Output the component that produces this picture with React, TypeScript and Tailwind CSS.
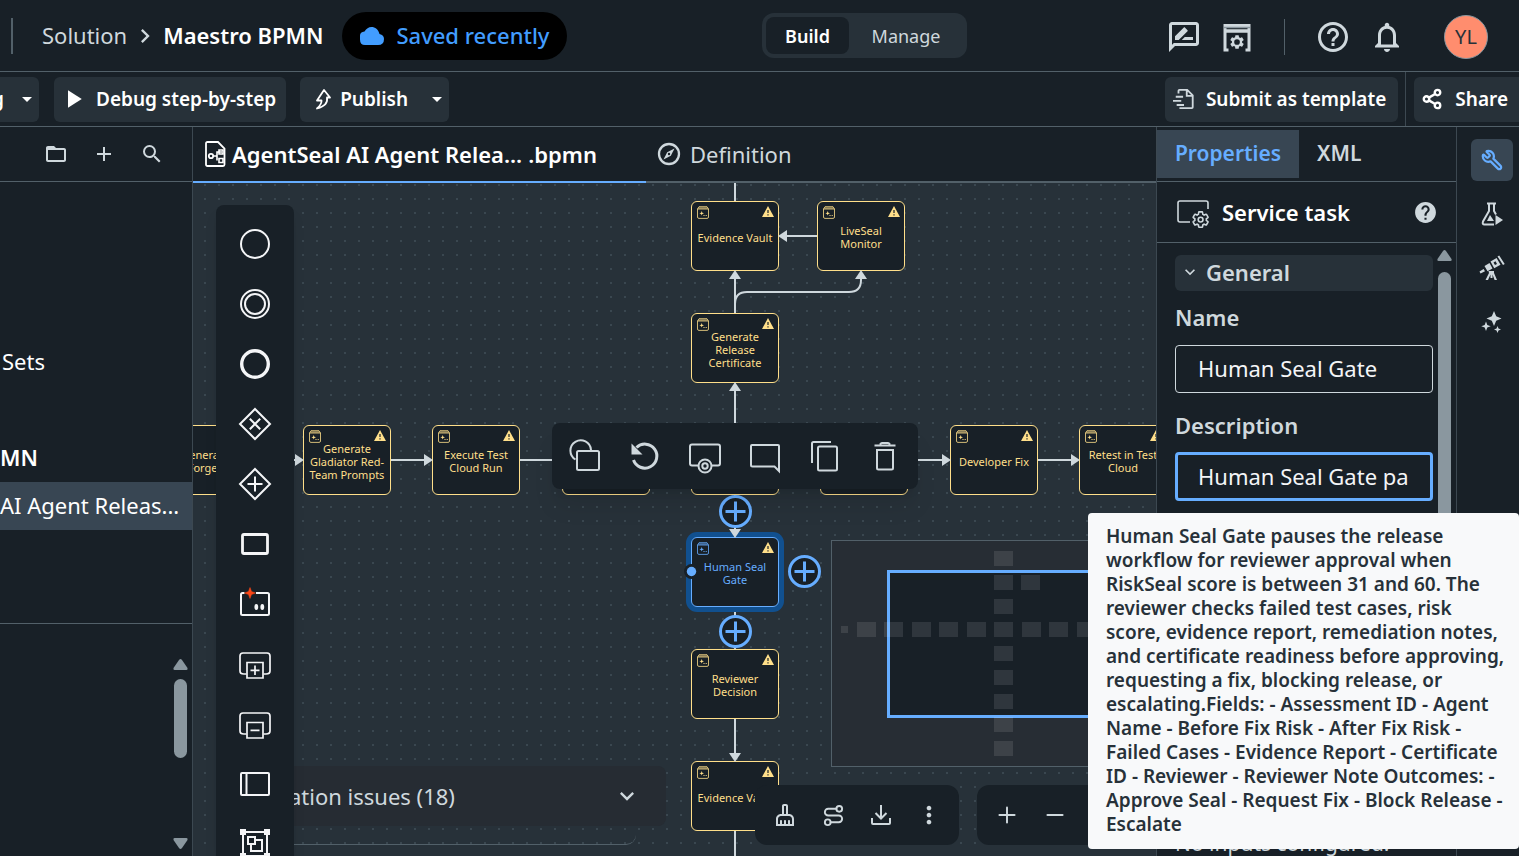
import React from 'react';
import { Minus, Plus, Route, Share2, Wrench } from 'lucide-react';
import {
  MdAdd,
  MdArrowDropDown,
  MdChevronRight,
  MdExpandMore,
  MdFolderOpen,
  MdHelp,
  MdHelpOutline,
  MdMoreVert,
  MdNotificationsNone,
  MdOutlineCleaningServices,
  MdOutlineRateReview,
  MdPlayArrow,
  MdSearch,
} from 'react-icons/md';

const GEAR =
  'M19.14 12.94c.04-.3.06-.61.06-.94s-.02-.64-.07-.94l2.03-1.58a.49.49 0 0 0 .12-.61l-1.92-3.32a.49.49 0 0 0-.59-.22l-2.39.96a7 7 0 0 0-1.62-.94l-.36-2.54A.48.48 0 0 0 13.92 2.4h-3.84a.47.47 0 0 0-.47.41l-.36 2.54a7.2 7.2 0 0 0-1.62.94l-2.39-.96a.48.48 0 0 0-.59.22L2.74 8.87a.47.47 0 0 0 .12.61l2.03 1.58a6 6 0 0 0-.01 1.88l-2.03 1.58a.49.49 0 0 0-.12.61l1.92 3.32c.12.22.37.29.59.22l2.39-.96c.5.38 1.03.7 1.62.94l.36 2.54c.05.24.24.41.48.41h3.84c.24 0 .44-.17.47-.41l.36-2.54a7 7 0 0 0 1.62-.94l2.39.96c.22.08.47 0 .59-.22l1.92-3.32a.47.47 0 0 0-.12-.61z';

interface FlowNode {
  id: string;
  label: string;
  x: number;
  y: number;
  selected?: boolean;
}

// Positions are canvas coordinates
const nodes: FlowNode[] = [
  { id: 'vault', label: 'Evidence Vault', x: 498, y: 18 },
  { id: 'live', label: 'LiveSeal Monitor', x: 624, y: 18 },
  { id: 'cert', label: 'Generate Release Certificate', x: 498, y: 130 },
  { id: 'forge', label: 'Generate Test Forge Suite', x: -20, y: 242 },
  { id: 'prompts', label: 'Generate Gladiator Red-Team Prompts', x: 110, y: 242 },
  { id: 'run', label: 'Execute Test Cloud Run', x: 239, y: 242 },
  { id: 'score', label: '', x: 369, y: 242 },
  { id: 'gateway', label: '', x: 498, y: 242 },
  { id: 'plan', label: '', x: 627, y: 242 },
  { id: 'fix', label: 'Developer Fix', x: 757, y: 242 },
  { id: 'retest', label: 'Retest in Test Cloud', x: 886, y: 242 },
  { id: 'gate', label: 'Human Seal Gate', x: 498, y: 354, selected: true },
  { id: 'decision', label: 'Reviewer Decision', x: 498, y: 466 },
  { id: 'vault2', label: 'Evidence Vault', x: 498, y: 578 },
];

const edges = [
  'M542 0V18',
  'M624 53H594',
  'M542 130V96',
  'M542 130V121Q542 109 554 109H656Q668 109 668 97V96',
  'M542 242V208',
  'M100 277H103',
  'M198 277H232',
  'M327 277H362',
  'M715 277H750',
  'M845 277H880',
  'M542 312V348',
  'M542 424V460',
  'M542 536V572',
  'M542 648V680',
];

const arrows = [
  'M585 53L594 47V59Z',
  'M542 87L536 96H548Z',
  'M668 87L662 96H674Z',
  'M542 199L536 208H548Z',
  'M111 277L102 271V283Z',
  'M240 277L231 271V283Z',
  'M758 277L749 271V283Z',
  'M887 277L878 271V283Z',
  'M542 355L536 346H548Z',
  'M542 467L536 458H548Z',
  'M542 579L536 570H548Z',
];

const addHandles = [
  { x: 526, y: 312 },
  { x: 595, y: 372 },
  { x: 526, y: 432 },
];

const minimapBlocks = [
  { x: 162, y: 10 },
  { x: 162, y: 34 },
  { x: 189, y: 34 },
  { x: 162, y: 58 },
  { x: 25, y: 81 },
  { x: 52, y: 81 },
  { x: 80, y: 81 },
  { x: 107, y: 81 },
  { x: 135, y: 81 },
  { x: 162, y: 81 },
  { x: 190, y: 81 },
  { x: 217, y: 81 },
  { x: 245, y: 81 },
  { x: 162, y: 105 },
  { x: 162, y: 129 },
  { x: 162, y: 153 },
  { x: 162, y: 176 },
  { x: 162, y: 200 },
];

const palette = [
  {
    name: 'Start event',
    icon: <circle cx="18" cy="18" r="14" strokeWidth="2" />,
  },
  {
    name: 'Intermediate event',
    icon: (
      <g strokeWidth="2">
        <circle cx="18" cy="18" r="14" />
        <circle cx="18" cy="18" r="10" />
      </g>
    ),
  },
  {
    name: 'End event',
    icon: <circle cx="18" cy="18" r="13.3" strokeWidth="3.4" />,
  },
  {
    name: 'Exclusive gateway',
    icon: <path d="M18 3l15 15-15 15L3 18zM12.8 12.8l10.4 10.4M23.2 12.8L12.8 23.2" strokeWidth="2" />,
  },
  {
    name: 'Parallel gateway',
    icon: <path d="M18 3l15 15-15 15L3 18zM18 10.5v15M10.5 18h15" strokeWidth="2" />,
  },
  {
    name: 'Task',
    icon: <rect x="5.5" y="8.5" width="25" height="19" rx="1.5" strokeWidth="2.8" />,
  },
  {
    name: 'Agent task',
    icon: (
      <>
        <path d="M7.500 7H5.500Q4 7 4 8.500V27.500Q4 29 5.500 29H30.500Q32 29 32 27.500V8.500Q32 7 30.500 7H19" strokeWidth="2" />
        <path d="M13 1.500L14.500 5.500L18.500 7L14.500 8.500L13 12.500L11.500 8.500L7.500 7L11.500 5.500Z" fill="#fa4616" stroke="#fa4616" strokeWidth="0.5" />
        <ellipse cx="19.300" cy="21" rx="1.900" ry="2.900" fill="currentColor" stroke="none" />
        <ellipse cx="25.300" cy="21" rx="1.900" ry="2.900" fill="currentColor" stroke="none" />
      </>
    ),
  },
  {
    name: 'Expanded subprocess',
    icon: (
      <g strokeWidth="1.7">
        <path d="M9.500 28H7Q3 28 3 25V10Q3 7 6 7H30Q33 7 33 10V25Q33 28 29 28H26.500" />
        <path d="M10 16.500H26V32H10ZM18 19.500V29M13.500 24.300H22.500" />
      </g>
    ),
  },
  {
    name: 'Collapsed subprocess',
    icon: (
      <g strokeWidth="1.7">
        <path d="M9.500 28H7Q3 28 3 25V10Q3 7 6 7H30Q33 7 33 10V25Q33 28 29 28H26.500" />
        <path d="M10 16.500H26V32H10ZM13.500 24.300H22.500" />
      </g>
    ),
  },
  {
    name: 'Pool',
    icon: <path d="M5 7H31Q32 7 32 8V28Q32 29 31 29H5Q4 29 4 28V8Q4 7 5 7ZM9.500 7V29" strokeWidth="2" />,
  },
  {
    name: 'Group',
    icon: (
      <>
        <path d="M6 6H30V30H6Z" strokeWidth="2" />
        <path d="M3 3h6v6H3zM27 3h6v6h-6zM3 27h6v6H3zM27 27h6v6h-6z" fill="currentColor" stroke="none" />
        <path d="M11 11h7v7h-7zM18 14h7v11h-11v-7" strokeWidth="2" />
      </>
    ),
  },
];

const contextActions = [
  {
    name: 'Change element',
    icon: (
      <>
        <path d="M8.500 21.500A10.300 10.300 0 1 1 24 12" />
        <rect x="10" y="13" width="22" height="19" rx="1.500" />
      </>
    ),
  },
  {
    name: 'Reset',
    icon: (
      <>
        <path d="M6.500 22A12 12 0 1 0 9.500 9.500" strokeWidth="3" />
        <path d="M4.500 5.500V16.500H15.500Z" fill="currentColor" stroke="none" />
      </>
    ),
  },
  {
    name: 'Add boundary event',
    icon: (
      <>
        <path d="M11 27.500H5Q3 27.500 3 25.500V8.500Q3 6.500 5 6.500H31Q33 6.500 33 8.500V25.500Q33 27.500 31 27.500H25" />
        <circle cx="18" cy="28" r="6.500" />
        <circle cx="18" cy="28" r="2.700" />
      </>
    ),
  },
  {
    name: 'Comment',
    icon: <path d="M32 33V8Q32 7 31 7H5Q4 7 4 8V27Q4 28.500 5.500 28.500H27.500Z" />,
  },
  {
    name: 'Copy',
    icon: <path d="M5 25V5.500Q5 4 6.500 4H24M12.500 8.500H28.500Q30 8.500 30 10V31Q30 32.500 28.500 32.500H12.500Q11 32.500 11 31V10Q11 8.500 12.500 8.500Z" />,
  },
  {
    name: 'Delete',
    icon: <path d="M7.500 7.500H28.500M13 6.500Q14 5 15 5H21Q22 5 23 6.500M10 12H26V30Q26 31.500 24.500 31.500H11.500Q10 31.500 10 30Z" />,
  },
];

function Warning() {
  return (
    <svg viewBox="0 0 12 11" className="absolute top-1 right-1 h-[11px] w-3">
      <path d="M6 0L12 11H0Z" fill="#ffdf8a" />
      <path d="M6 4V7M6 8.200V9.400" stroke="#182027" strokeWidth="1.200" />
    </svg>
  );
}

function TaskIcon() {
  return (
    <svg viewBox="0 0 12 13" className="absolute top-1 left-[5px] h-[13px] w-3" fill="none" stroke="currentColor">
      <path d="M0.500 3L2 0.700H10L11.500 3V11Q11.500 12.400 10 12.400H2Q0.500 12.400 0.500 11ZM0.500 3H11.500" opacity="0.800" />
      <path d="M1 3L2.200 1H9.800L11 3Z" fill="currentColor" stroke="none" opacity="0.400" />
      <path d="M4.700 5L5.300 6.700L7 7.300L5.300 7.900L4.700 9.600L4.100 7.900L2.400 7.300L4.100 6.700Z" fill="currentColor" stroke="none" />
      <path d="M6.500 9.500h1M8.700 9.500h1" />
    </svg>
  );
}

function NodeCard({ node }: { node: FlowNode }) {
  return (
    <div
      className={`absolute flex h-[70px] w-[88px] items-center justify-center rounded-[6px] border px-1 pt-0.5 text-center text-[11px] leading-[13px] ${
        node.selected
          ? 'border-[#66adff] bg-[#182027] text-[#66adff] ring-[5px] ring-[#11508f]'
          : 'border-[#ffdf8a] bg-[#182027] text-[#ffdf8a]'
      }`}
      style={{ left: node.x, top: node.y }}
    >
      <TaskIcon />
      <Warning />
      {node.label}
    </div>
  );
}

function Header() {
  return (
    <header className="flex h-[72px] shrink-0 items-center border-b border-[#526069] pr-[31px] pl-[11px]">
      <div className="flex flex-1 items-center">
        <div className="h-9 w-0.5 bg-[#526069]" />
        <a href="#solution" className="ml-[29px] text-[22px] text-[#cfd8dd]">Solution</a>
        <MdChevronRight size={28} className="mx-1 text-[#cfd8dd]" />
        <span className="text-[22px] font-semibold text-white">Maestro BPMN</span>
        <div className="ml-[19px] flex h-12 items-center gap-3 rounded-full bg-black px-[18px] text-[22px] font-medium text-[#429dff]">
          <svg viewBox="0 0 24 18" className="h-[18px] w-6" fill="currentColor">
            <path d="M5 18Q0 18 0 12.500V8.500Q0 5 4.500 4.500C6.500 1.500 8.500 0 11.500 0C15 0 18.500 2.500 19.500 7C22.500 7.500 24 9.500 24 12Q24 18 18 18Z" />
          </svg>
          Saved recently
        </div>
      </div>
      <nav className="flex h-[45px] items-center rounded-xl bg-[#273139] p-1 text-lg">
        <button className="h-[37px] w-[83px] rounded-lg bg-[#182027] font-semibold text-white">Build</button>
        <button className="w-[114px] text-[#cfd8dd]">Manage</button>
      </nav>
      <div className="flex w-[521px] items-center justify-end pt-0.5 text-[#cfd8dd]">
        <button aria-label="Feedback">
          <MdOutlineRateReview size={36} />
        </button>
        <button aria-label="App settings" className="ml-[17px]">
          <svg viewBox="0 0 36 36" className="size-9" fill="none" stroke="currentColor">
            <path d="M9.500 31H6V6.500H30V31H26.500" strokeWidth="3" />
            <path d="M5 12H31" strokeWidth="3.500" />
            <path d="M5 8.500H31" stroke="#8a979f" strokeWidth="1.500" />
            <g transform="translate(9.500 14.500) scale(0.710)">
              <path d={GEAR} fill="currentColor" stroke="none" />
              <circle cx="12" cy="12" r="4" fill="#182027" stroke="none" />
            </g>
          </svg>
        </button>
        <div className="ml-[29px] h-9 w-px bg-[#526069]" />
        <button aria-label="Help" className="ml-[30px]">
          <MdHelpOutline size={36} />
        </button>
        <button aria-label="Notifications" className="ml-[18px]">
          <MdNotificationsNone size={36} />
        </button>
        <button className="ml-[39px] size-11 rounded-full border border-[#8a979f] bg-[#ff8d6e] text-xl text-[#273139]">YL</button>
      </div>
    </header>
  );
}

function Toolbar() {
  return (
    <div className="flex h-[55px] shrink-0 items-center border-b border-[#526069] text-[19px] font-semibold text-white">
      <button className="flex h-[45px] w-[39px] items-center justify-between overflow-hidden rounded-r-md bg-[#273139]">
        <span className="-ml-2">g</span>
        <MdArrowDropDown size={24} className="shrink-0" />
      </button>
      <button className="ml-[15px] flex h-[45px] items-center gap-[11px] rounded-md bg-[#273139] pr-[10px] pl-[7px]">
        <MdPlayArrow size={24} className="scale-125" />
        Debug step-by-step
      </button>
      <div className="ml-[14px] flex h-[45px] items-center rounded-md bg-[#273139]">
        <button className="flex items-center gap-2 pl-[14px]">
          <svg viewBox="0 0 18 24" className="h-6 w-[18px]" fill="none" stroke="currentColor" strokeWidth="1.800" strokeLinejoin="round">
            <path d="M10 3L16 10.500H13Q14.500 18.500 3 21.500Q8 17 7.500 13.500H3Z" />
          </svg>
          Publish
        </button>
        <button aria-label="More publish options" className="pl-[17px]">
          <MdArrowDropDown size={24} />
        </button>
      </div>
      <div className="flex-1" />
      <button className="flex h-[45px] items-center gap-[11px] rounded-md bg-[#273139] pr-3 pl-2">
        <svg viewBox="0 0 24 24" className="size-[22px]" fill="none" stroke="#cfd8dd" strokeWidth="2">
          <path d="M6 6V3Q6 2 7 2H15.500L21.500 8V21Q21.500 22 20.500 22H7M15 2V8.500H21M3 9.500H11M0 14H9M4 18.500H12" />
        </svg>
        Submit as template
      </button>
      <div className="mr-2 ml-[7px] h-full w-px bg-[#3c4851]" />
      <button className="flex h-[45px] items-center gap-3 rounded-l-md bg-[#273139] pr-[11px] pl-[7px]">
        <Share2 size={22} strokeWidth={2.6} />
        Share
      </button>
    </div>
  );
}

function Sidebar() {
  return (
    <aside className="flex w-[193px] shrink-0 flex-col border-r border-[#3c4851] text-[22px] text-white">
      <div className="flex h-[55px] shrink-0 items-center justify-end gap-6 border-b border-[#526069] pr-7 text-[#cfd8dd]">
        <button aria-label="New folder"><MdFolderOpen size={24} /></button>
        <button aria-label="Add"><MdAdd size={24} /></button>
        <button aria-label="Search"><MdSearch size={24} /></button>
      </div>
      <ul className="flex h-[442px] shrink-0 flex-col border-b border-[#526069] pt-[156px] leading-[46px]">
        <li className="mb-12 h-12 pl-[2px]">Sets</li>
        <li className="h-12 font-semibold">MN</li>
        <li className="h-12 bg-[#384653] whitespace-nowrap">AI Agent Releas...</li>
      </ul>
      <div className="flex flex-1 justify-end pr-1">
        <div className="flex flex-col items-center pt-[35px] pb-[7px]">
          <svg viewBox="0 0 15 11" className="h-[11px] w-[15px]" fill="#8a979f">
            <path d="M7.500 0Q8.200 0 9 1L14.500 9Q15 11 13.500 11H1.500Q0 11 0.500 9L6 1Q6.800 0 7.500 0Z" />
          </svg>
          <div className="mt-[9px] h-[79px] w-[13px] rounded-full bg-[#8a979f]" />
          <svg viewBox="0 0 15 11" className="mt-auto h-[11px] w-[15px] rotate-180" fill="#8a979f">
            <path d="M7.500 0Q8.200 0 9 1L14.500 9Q15 11 13.500 11H1.500Q0 11 0.500 9L6 1Q6.800 0 7.500 0Z" />
          </svg>
        </div>
      </div>
    </aside>
  );
}

function Minimap() {
  return (
    <div className="absolute right-[23px] bottom-[89px] h-[227px] w-[302px] border border-[#526069] bg-[#272d34]">
      <div className="absolute top-[29px] left-[55px] h-[148px] w-[230px] border-[3px] border-[#66adff] bg-[#182027]" />
      <div className="absolute top-[85px] left-[9px] size-[7px] bg-white/10" />
      {minimapBlocks.map((block) => (
        <div key={`${block.x}-${block.y}`} className="absolute h-[15px] w-[19px] bg-white/10" style={{ left: block.x, top: block.y }} />
      ))}
    </div>
  );
}

function Canvas() {
  return (
    <div className="relative flex-1 overflow-hidden bg-[#273139] [background-image:radial-gradient(circle,#3a4750_1px,transparent_1.500px)] [background-position:5px_9px] [background-size:14px_14px]">
      <svg className="absolute inset-0 size-full" fill="none">
        {edges.map((d) => (
          <path key={d} d={d} stroke="#cfd8dd" strokeWidth="2" />
        ))}
      </svg>
      {nodes.map((node) => (
        <NodeCard key={node.id} node={node} />
      ))}
      <svg className="absolute inset-0 size-full" fill="#cfd8dd">
        {arrows.map((d) => (
          <path key={d} d={d} />
        ))}
        <circle cx="498.500" cy="388.500" r="7.500" fill="#182027" />
        <circle cx="498.500" cy="388.500" r="4.700" fill="#66adff" />
      </svg>
      {addHandles.map((handle) => (
        <button key={`${handle.x}-${handle.y}`} aria-label="Add element" className="absolute size-[33px]" style={{ left: handle.x, top: handle.y }}>
          <svg viewBox="0 0 33 33" className="size-full" fill="#182027" stroke="#66adff" strokeWidth="3">
            <circle cx="16.500" cy="16.500" r="15" />
            <path d="M16.500 6.500V26.500M6.500 16.500H26.500" />
          </svg>
        </button>
      ))}

      {/* Validation drawer */}
      <div className="absolute bottom-[11px] left-9 h-8 w-[407px] rounded-br-[10px] border-b border-[#526069]" />
      <button className="absolute bottom-[30px] left-9 flex h-[60px] w-[437px] items-center justify-between rounded-lg bg-[#262c33] pr-[25px] pl-[10px] text-[22px] text-[#cfd8dd]">
        Validation issues (18)
        <MdExpandMore size={28} />
      </button>

      {/* Element palette */}
      <div className="absolute top-[22px] bottom-0 left-[23px] flex w-[78px] flex-col items-center overflow-hidden rounded-t-lg bg-[#182027] pt-[9px] text-[#f4f5f7] shadow-lg">
        {palette.map((item) => (
          <button key={item.name} aria-label={item.name} className="flex h-[60px] w-[60px] shrink-0 items-center justify-center">
            <svg viewBox="0 0 36 36" className="size-9" fill="none" stroke="currentColor">
              {item.icon}
            </svg>
          </button>
        ))}
      </div>

      {/* Context pad of the selected element */}
      <div className="absolute top-[240px] left-[359px] flex h-[66px] items-center rounded-lg bg-[#182027] px-[3px] text-[#cfd8dd] shadow-xl">
        {contextActions.map((action) => (
          <button key={action.name} aria-label={action.name} className="flex h-[60px] w-[60px] items-center justify-center">
            <svg viewBox="0 0 36 36" className="size-9" fill="none" stroke="currentColor" strokeWidth="2">
              {action.icon}
            </svg>
          </button>
        ))}
      </div>

      <Minimap />

      <div className="absolute right-[23px] bottom-[11px] flex gap-[18px] text-[#cfd8dd]">
        <div className="flex h-[60px] items-center rounded-xl bg-[#182027] px-[6px]">
          <button aria-label="Clean up" className="flex size-12 items-center justify-center"><MdOutlineCleaningServices size={24} /></button>
          <button aria-label="Auto layout" className="flex size-12 items-center justify-center"><Route size={23} /></button>
          <button aria-label="Download" className="flex size-12 items-center justify-center">
            <svg viewBox="0 0 24 24" className="size-6" fill="none" stroke="currentColor" strokeWidth="2">
              <path d="M12 2V15M6.500 10L12 15.500L17.500 10M3 15V20Q3 21 4 21H20Q21 21 21 20V15" />
            </svg>
          </button>
          <button aria-label="More" className="flex size-12 items-center justify-center"><MdMoreVert size={28} /></button>
        </div>
        <div className="flex h-[60px] items-center rounded-xl bg-[#182027] px-[6px]">
          <button aria-label="Zoom in" className="flex size-12 items-center justify-center"><Plus size={26} strokeWidth={1.8} /></button>
          <button aria-label="Zoom out" className="flex size-12 items-center justify-center"><Minus size={26} strokeWidth={1.8} /></button>
          <button aria-label="Fit to view" className="size-12" />
        </div>
      </div>
    </div>
  );
}

function Editor() {
  return (
    <main className="flex min-w-0 flex-1 flex-col">
      <div className="flex h-14 shrink-0 text-[22px]">
        <button className="flex w-[453px] items-center gap-[6px] border-b-2 border-[#66adff] pl-3 font-semibold whitespace-nowrap text-white">
          <svg viewBox="0 0 21 26" className="h-[26px] w-[21px]" fill="none" stroke="currentColor" strokeWidth="1.800">
            <path d="M2.500 1H13L19.500 7.500V23.500Q19.500 25 18 25H2.500Q1 25 1 23.500V2.500Q1 1 2.500 1Z" />
            <circle cx="6" cy="15" r="2.200" />
            <path d="M8.200 15H12M17 11H12V19.500M14 9H18V13H14ZM14 17.500H18V21.500H14Z" strokeWidth="1.600" />
          </svg>
          <span>AgentSeal AI Agent Relea...</span>
          <span>.bpmn</span>
        </button>
        <button className="flex flex-1 items-center gap-2 border-b-2 border-[#526069] pl-[10px] text-[#cfd8dd]">
          <svg viewBox="0 0 26 26" className="size-[26px]" fill="none" stroke="currentColor" strokeWidth="2.300">
            <circle cx="13" cy="13" r="10" />
            <path d="M18.500 7.500L14.800 14.800L7.500 18.500L11.200 11.200Z" fill="currentColor" stroke="none" />
            <circle cx="13" cy="13" r="1.200" fill="#182027" stroke="none" />
          </svg>
          Definition
        </button>
      </div>
      <Canvas />
    </main>
  );
}

function PropertiesPanel() {
  return (
    <section className="flex w-[300px] shrink-0 flex-col border-l border-[#3c4851] text-[22px] text-[#cfd8dd]">
      <div className="flex h-[55px] shrink-0 items-start border-b border-[#526069] pt-[3px] text-[21px] font-semibold">
        <button className="h-12 w-[142px] bg-[#384653] text-[#66adff]">Properties</button>
        <button className="h-12 px-[18px]">XML</button>
      </div>
      <div className="flex h-[61px] shrink-0 items-center border-b border-[#526069] px-[18px]">
        <svg viewBox="0 0 36 36" className="size-9" fill="none" stroke="currentColor" strokeWidth="1.600">
          <path d="M15 28H5Q3 28 3 26V9Q3 7 5 7H31Q33 7 33 9V15" />
          <g transform="translate(16 16) scale(0.800)">
            <path d={GEAR} strokeWidth="2" />
            <circle cx="12" cy="12" r="3" strokeWidth="2" />
          </g>
        </svg>
        <h2 className="ml-[11px] flex-1 font-semibold text-white">Service task</h2>
        <button aria-label="About service tasks"><MdHelp size={25} /></button>
      </div>
      <div className="flex min-h-0 flex-1 overflow-hidden">
        <div className="ml-[18px] flex w-[258px] shrink-0 flex-col pt-3">
          <button className="flex h-9 shrink-0 items-center gap-[6px] rounded-md bg-[#273139] pb-0.5 pl-[5px] font-semibold">
            <MdExpandMore size={20} />
            General
          </button>
          <label htmlFor="name" className="mt-[11px] leading-[30px] font-semibold">Name</label>
          <input
            id="name"
            defaultValue="Human Seal Gate"
            className="mt-[13px] h-12 shrink-0 rounded-[4px] border border-[#cfd8dd] bg-transparent px-[22px] pb-0.5 text-[#f4f5f7] outline-none"
          />
          <label htmlFor="description" className="mt-[17px] leading-[30px] font-semibold">Description</label>
          <input
            id="description"
            defaultValue="Human Seal Gate pauses the release workflow for reviewer approval"
            className="mt-3 h-[49px] shrink-0 rounded-[4px] border-[3px] border-[#66adff] bg-transparent px-5 pb-0.5 text-[#f4f5f7] outline-none"
          />
          <p className="mt-[327px] shrink-0 text-[21px] leading-[30px]">No inputs configured.</p>
        </div>
        <div className="ml-1 flex flex-col items-center pt-[7px]">
          <svg viewBox="0 0 15 11" className="h-[11px] w-[15px]" fill="#8a979f">
            <path d="M7.500 0Q8.200 0 9 1L14.500 9Q15 11 13.500 11H1.500Q0 11 0.500 9L6 1Q6.800 0 7.500 0Z" />
          </svg>
          <div className="mt-[11px] h-[420px] w-[13px] rounded-full bg-[#8a979f]" />
        </div>
      </div>
    </section>
  );
}

function Rail() {
  return (
    <nav className="flex w-[63px] shrink-0 flex-col items-center gap-3 border-l border-[#3c4851] pt-3 pl-[7px] text-[#cfd8dd]">
      <button aria-label="Properties" className="flex size-[42px] items-center justify-center rounded-md bg-[#384653] text-[#66adff]">
        <Wrench size={22} strokeWidth={2.4} className="-scale-x-100" />
      </button>
      <button aria-label="Test" className="flex size-[42px] items-center justify-center">
        <svg viewBox="0 0 24 24" className="size-6" fill="none" stroke="currentColor" strokeWidth="2">
          <path d="M7 1.500H16M9 2V9L3 19.500Q2 22.500 4.500 22.500H14M14 2V9L16 12.500" />
          <path d="M15.500 13V23L23 18Z" fill="currentColor" stroke="none" />
          <path d="M10 13L14 19H7Z" fill="currentColor" stroke="none" />
        </svg>
      </button>
      <button aria-label="Trace" className="flex size-[42px] items-center justify-center">
        <svg viewBox="0 0 26 26" className="size-[26px]" fill="currentColor">
          <path d="M18.500 1.500L20.200 .5L25.700 9L24 10ZM11.500 6.500L17.600 3L21.500 9.700L15.200 13.200ZM5.500 11L10.500 8L13.500 13.500L8.500 16.200ZM.5 16.500L4.600 14L6 16.300L1.500 18.500ZM9.500 16H15V18L18 25H15.600L13.500 19.500V23H11.500V19.500L9 25H6.500L10 18Z" />
          <path d="M14.500 7.500L16.500 6.300L18 8.900L16 10.100Z" fill="#182027" />
        </svg>
      </button>
      <button aria-label="Autopilot" className="flex size-[42px] items-center justify-center">
        <svg viewBox="0 0 24 24" className="size-6" fill="currentColor">
          <path d="M14 1L16.200 6.300L21.500 8.500L16.200 10.700L14 16L11.800 10.700L6.500 8.500L11.800 6.300ZM6 11.500L7.300 14.900L10.700 16.200L7.300 17.500L6 21L4.700 17.500L1.300 16.200L4.700 14.900ZM17.500 16L18.500 18.500L21 19.500L18.500 20.500L17.500 23L16.500 20.500L14 19.500L16.500 18.500Z" />
        </svg>
      </button>
    </nav>
  );
}

const tooltipLines = [
  'Human Seal Gate pauses the release',
  'workflow for reviewer approval when',
  'RiskSeal score is between 31 and 60. The',
  'reviewer checks failed test cases, risk',
  'score, evidence report, remediation notes,',
  'and certificate readiness before approving,',
  'requesting a fix, blocking release, or',
  'escalating.Fields: - Assessment ID - Agent',
  'Name - Before Fix Risk - After Fix Risk -',
  'Failed Cases - Evidence Report - Certificate',
  'ID - Reviewer - Reviewer Note Outcomes: -',
  'Approve Seal - Request Fix - Block Release -',
  'Escalate',
];

export default function App() {
  return (
    <div className="relative flex h-screen flex-col overflow-hidden bg-[#182027] font-['Noto_Sans',sans-serif]">
      <Header />
      <Toolbar />
      <div className="flex min-h-0 flex-1">
        <Sidebar />
        <Editor />
        <PropertiesPanel />
        <Rail />
      </div>
      <div
        role="tooltip"
        className="absolute right-0 bottom-[7px] w-[431px] rounded-[4px] bg-[#f8f9fa] pt-[11px] pb-[13px] pl-[18px] text-[19px] leading-6 font-semibold whitespace-pre text-[#273139]"
      >
        {tooltipLines.join('\n')}
      </div>
    </div>
  );
}
